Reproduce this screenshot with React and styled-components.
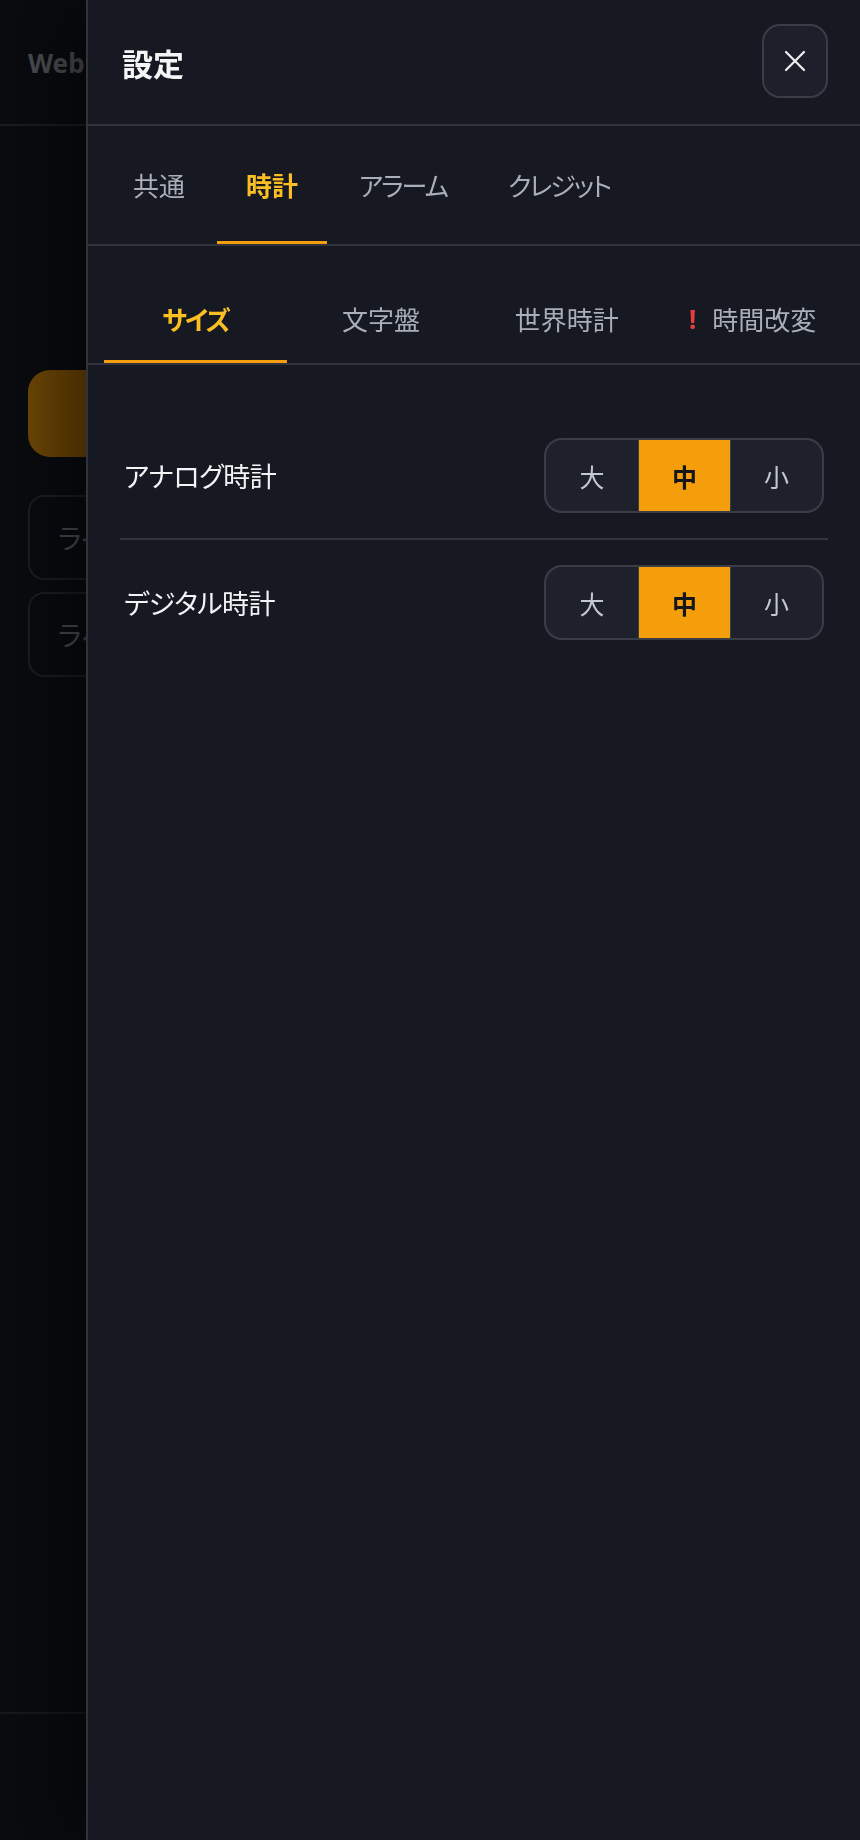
import styled, { createGlobalStyle } from "styled-components";

const GlobalStyle = createGlobalStyle`
  html, body {
    margin: 0;
    padding: 0;
    background: #161922;
  }
  body {
    font-family: "Noto Sans", "Noto Sans CJK JP", sans-serif;
    font-feature-settings: "palt";
    color: #f3f4f6;
  }
  * { box-sizing: border-box; }
`;

const isKana = (s) => /^[\u30A0-\u30FF]+$/.test(s);

/* ---------- page behind the drawer ---------- */

const Page = styled.div`
  min-height: 1840px;
  display: flex;
  flex-direction: column;
  background: #161922;
`;

const PageHeader = styled.header`
  height: 126px;
  padding: 0 28px;
  display: flex;
  align-items: center;
  border-bottom: 2px solid #3a3f48;
`;

const Brand = styled.h1`
  margin: 0;
  font-size: 26px;
  font-weight: 700;
  color: #a4aab5;
`;

const PageMain = styled.main`
  flex: 1;
  padding: 244px 28px 0;
  display: flex;
  flex-direction: column;
`;

const PrimaryButton = styled.button`
  height: 87px;
  border: none;
  border-radius: 22px;
  background: #f59e0b;
`;

const OptionList = styled.div`
  margin-top: 38px;
  display: flex;
  flex-direction: column;
  gap: 12px;
`;

const OptionBox = styled.div`
  height: 85px;
  border: 2px solid #3d424b;
  border-radius: 16px;
  padding: 0 28px;
  display: flex;
  align-items: center;
  font-size: 27px;
  color: #a4aab5;
`;

const PageFooter = styled.footer`
  height: 128px;
  border-top: 2px solid #33373f;
`;

/* ---------- drawer ---------- */

const Overlay = styled.div`
  position: fixed;
  inset: 0;
  background: rgba(0, 0, 0, 0.55);
`;

const Drawer = styled.aside`
  position: fixed;
  top: 0;
  right: 0;
  bottom: 0;
  width: 774px;
  background: #161922;
  border-left: 2px solid #30333b;
  box-shadow: -30px 0 60px rgba(0, 0, 0, 0.45);
  display: flex;
  flex-direction: column;
`;

const DrawerHeader = styled.div`
  height: 126px;
  padding: 0 32px 0 34px;
  display: flex;
  align-items: center;
  justify-content: space-between;
  border-bottom: 2px solid #30333b;
`;

const Title = styled.h2`
  margin: 0;
  font-size: 31px;
  font-weight: 700;
  color: #f5f5f5;
`;

const CloseButton = styled.button`
  width: 66px;
  height: 74px;
  border-radius: 18px;
  border: 2px solid #3a3d46;
  background: #1d202a;
  color: #f0f0f0;
  display: flex;
  align-items: center;
  justify-content: center;
  padding: 0;
  margin-top: -2px;
`;

const TabBar = styled.nav`
  height: 120px;
  padding: 0 16px;
  display: flex;
  gap: 3px;
  border-bottom: 2px solid #30333b;
`;

const Tab = styled.div`
  position: relative;
  padding: 0 29px;
  display: flex;
  align-items: center;
  font-size: 26px;
  letter-spacing: ${(p) => (p.$kana ? "-2px" : "0")};
  font-weight: ${(p) => (p.$active ? 700 : 400)};
  color: ${(p) => (p.$active ? "#fbbf24" : "#a9aeb8")};

  &::after {
    content: "";
    position: absolute;
    left: 0;
    right: 0;
    bottom: 0;
    height: 3px;
    background: ${(p) => (p.$active ? "#f59e0b" : "transparent")};
  }
`;

const SubTabBar = styled.nav`
  padding: 35px 16px 0;
  display: grid;
  grid-template-columns: repeat(4, 1fr);
  gap: 3px;
  border-bottom: 2px solid #30333b;
`;

const SubTab = styled(Tab)`
  height: 82px;
  padding: 0 0 6px;
  justify-content: center;
  font-size: 26px;
`;

const Warn = styled.span`
  color: #e53e3e;
  font-weight: 700;
  letter-spacing: 0;
  margin-right: 16px;
`;

const Content = styled.div`
  padding: 48px 32px;
`;

const SettingRow = styled.div`
  padding: 25px 4px;
  display: flex;
  align-items: center;
  justify-content: space-between;

  & + & {
    border-top: 2px solid #33363f;
  }
`;

const Label = styled.span`
  font-size: 27px;
  letter-spacing: -0.5px;
  color: #f3f4f6;
`;

const Segmented = styled.div`
  display: flex;
  height: 75px;
  border: 2px solid #3a3d46;
  border-radius: 18px;
  overflow: hidden;
  background: #1e212b;
`;

const Segment = styled.button`
  width: 92px;
  border: none;
  padding: 0;
  font-family: inherit;
  font-size: 25px;
  font-weight: ${(p) => (p.$active ? 700 : 400)};
  color: ${(p) => (p.$active ? "#15161a" : "#c3c7cf")};
  background: ${(p) => (p.$active ? "#f59e0b" : "transparent")};

  & + & {
    border-left: 1px solid #3a3d46;
  }
`;

const mainTabs = ["共通", "時計", "アラーム", "クレジット"];
const subTabs = ["サイズ", "文字盤", "世界時計", "時間改変"];
const sizes = ["大", "中", "小"];

function SizeControl({ value }) {
  return (
    <Segmented>
      {sizes.map((s) => (
        <Segment key={s} $active={s === value}>
          {s}
        </Segment>
      ))}
    </Segmented>
  );
}

export default function App() {
  return (
    <>
      <GlobalStyle />
      <Page>
        <PageHeader>
          <Brand>Web時計</Brand>
        </PageHeader>
        <PageMain>
          <PrimaryButton />
          <OptionList>
            <OptionBox>ライト</OptionBox>
            <OptionBox>ラベル</OptionBox>
          </OptionList>
        </PageMain>
        <PageFooter />
      </Page>

      <Overlay />
      <Drawer>
        <DrawerHeader>
          <Title>設定</Title>
          <CloseButton aria-label="close">
            <svg width="22" height="22" viewBox="0 0 22 22" fill="none" stroke="currentColor" strokeWidth="2.2" strokeLinecap="round">
              <path d="M2 2 L20 20 M20 2 L2 20" />
            </svg>
          </CloseButton>
        </DrawerHeader>

        <TabBar>
          {mainTabs.map((t) => (
            <Tab key={t} $active={t === "時計"} $kana={isKana(t)}>
              {t}
            </Tab>
          ))}
        </TabBar>

        <SubTabBar>
          {subTabs.map((t) => (
            <SubTab key={t} $active={t === "サイズ"} $kana={isKana(t)}>
              {t === "時間改変" && <Warn>!</Warn>}
              {t}
            </SubTab>
          ))}
        </SubTabBar>

        <Content>
          <SettingRow>
            <Label>アナログ時計</Label>
            <SizeControl value="中" />
          </SettingRow>
          <SettingRow>
            <Label>デジタル時計</Label>
            <SizeControl value="中" />
          </SettingRow>
        </Content>
      </Drawer>
    </>
  );
}
